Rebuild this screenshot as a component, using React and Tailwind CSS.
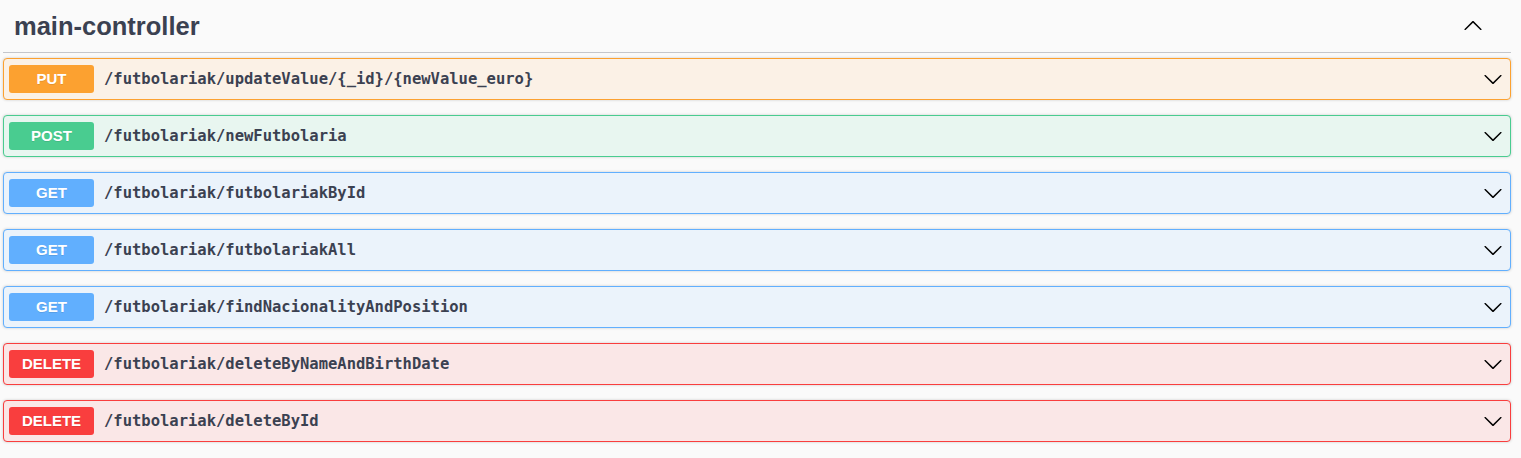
import { useState } from 'react'

const OPS = [
  { method: 'PUT', path: '/futbolariak/updateValue/{_id}/{newValue_euro}' },
  { method: 'POST', path: '/futbolariak/newFutbolaria' },
  { method: 'GET', path: '/futbolariak/futbolariakById' },
  { method: 'GET', path: '/futbolariak/futbolariakAll' },
  { method: 'GET', path: '/futbolariak/findNacionalityAndPosition' },
  { method: 'DELETE', path: '/futbolariak/deleteByNameAndBirthDate' },
  { method: 'DELETE', path: '/futbolariak/deleteById' },
]

const STYLES = {
  PUT: { block: 'border-[#fca130] bg-[#fbf1e6]', badge: 'bg-[#fca130]' },
  POST: { block: 'border-[#49cc90] bg-[#e8f6f0]', badge: 'bg-[#49cc90]' },
  GET: { block: 'border-[#61affe] bg-[#ebf3fb]', badge: 'bg-[#61affe]' },
  DELETE: { block: 'border-[#f93e3e] bg-[#fae7e7]', badge: 'bg-[#f93e3e]' },
}

const ARROW =
  'M17.418 6.109c.272-.268.709-.268.979 0s.271.701 0 .969l-7.908 7.83c-.27.268-.707.268-.979 0l-7.908-7.83c-.27-.268-.27-.701 0-.969.271-.268.709-.268.979 0L10 13.25l7.418-7.141z'

function Arrow({ up }) {
  return (
    <svg width="20" height="20" viewBox="0 0 20 20" className={up ? 'rotate-180' : ''}>
      <path d={ARROW} fill="#000" />
    </svg>
  )
}

function Operation({ method, path }) {
  const s = STYLES[method]
  return (
    <div className={`flex items-center h-[42px] border rounded-[4px] pl-[5px] pr-[7px] shadow-[0_0_3px_rgba(0,0,0,0.19)] ${s.block}`}>
      <span
        className={`w-[85px] h-[28px] flex items-center justify-center rounded-[3px] text-white text-[15px] font-bold [text-shadow:0_1px_0_rgba(0,0,0,0.1)] ${s.badge}`}
        style={{ fontFamily: '"Liberation Sans", Arial, sans-serif' }}
      >
        {method}
      </span>
      <span
        className="flex-1 pl-[10px] pt-[2px] text-[15.5px] font-bold text-[#3b4151]"
        style={{ fontFamily: '"DejaVu Sans Mono", monospace' }}
      >
        {path}
      </span>
      <Arrow />
    </div>
  )
}

export default function App() {
  const [open] = useState(true)
  return (
    <div className="min-h-screen bg-[#fafafa] pl-[3px] pr-[10px]">
      <div
        className="flex items-center justify-between h-[53px] pl-[11px] pr-[28px] border-b border-[#c4c6cb] text-[#3b4151]"
        style={{ fontFamily: '"Liberation Sans", Arial, sans-serif' }}
      >
        <h3 className="text-[25.5px] font-bold">main-controller</h3>
        <Arrow up={open} />
      </div>
      <div className="flex flex-col gap-[15px] pt-[5px]">
        {OPS.map((op) => (
          <Operation key={op.path} {...op} />
        ))}
      </div>
    </div>
  )
}
